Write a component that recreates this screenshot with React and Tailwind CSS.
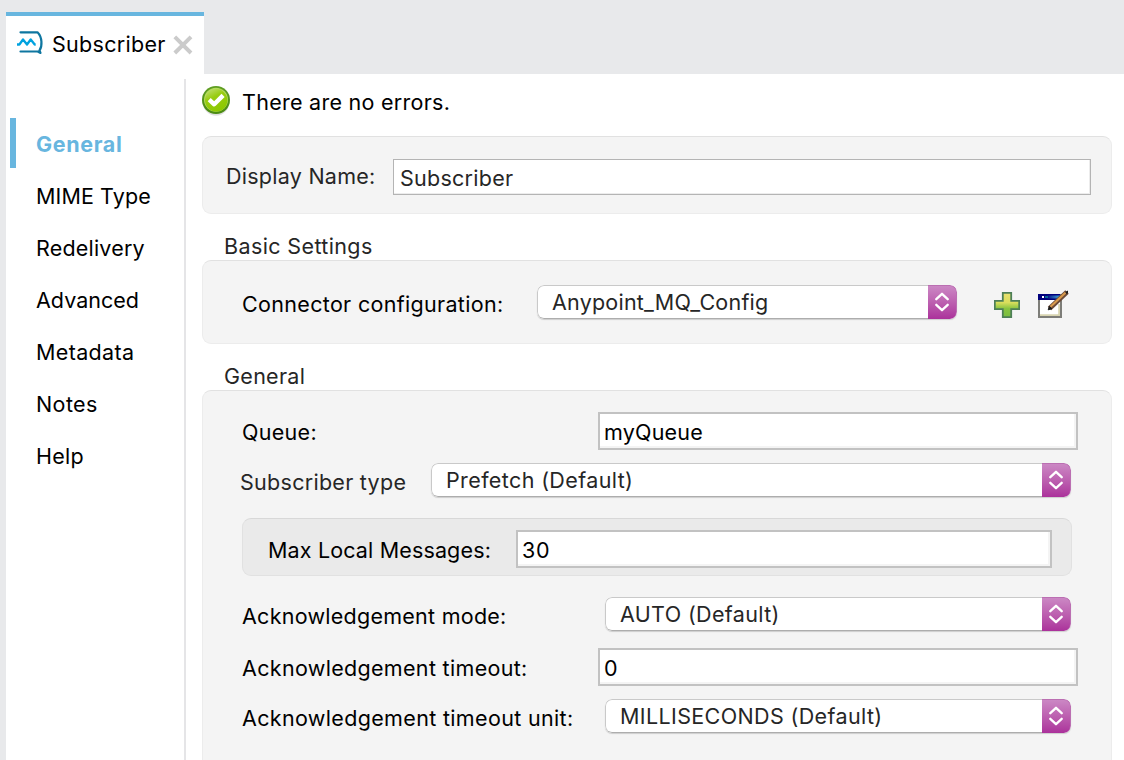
import React from "react";
import clsx from "clsx";

function SubscriberIcon() {
  return (
    <svg className="-ml-[1px] mb-[4px] h-[26px] w-[28px] shrink-0" viewBox="0 0 28 26" fill="none">
      <path d="M5.500 2.300h17c4.800 4.800 5 14 2 18.200l1 2.400-2.800-1.400H5.500" stroke="#0e76a0" strokeWidth="2.200" strokeLinecap="round" strokeLinejoin="round" />
      <path d="M2 14.500h2.400l3.600-5 4 5 3.700-5 4 5h1" stroke="#00a2df" strokeWidth="2.300" strokeLinejoin="round" />
    </svg>
  );
}

function CloseIcon() {
  return (
    <svg className="h-[20px] w-[20px] shrink-0" viewBox="0 0 20 20" fill="none">
      <path d="M1.8 1.8l16.2 16.2M18 1.8L1.8 18" stroke="#cbcbcb" strokeWidth="3.9" />
    </svg>
  );
}

function OkIcon() {
  return (
    <svg className="-ml-[1px] h-[32px] w-[30px] shrink-0" viewBox="0 0 30 32">
      <defs>
        <linearGradient id="okRing" x1="0" y1="0" x2="0" y2="1">
          <stop offset="0" stopColor="#5f9e22" />
          <stop offset="1" stopColor="#4a8a12" />
        </linearGradient>
        <linearGradient id="okFill" x1="0.1" y1="0" x2="0.6" y2="1">
          <stop offset="0" stopColor="#c0e070" />
          <stop offset="0.4" stopColor="#98cc10" />
          <stop offset="1" stopColor="#8cc800" />
        </linearGradient>
      </defs>
      <ellipse cx="15" cy="17.5" rx="13.2" ry="13.2" fill="#000" opacity="0.13" />
      <circle cx="15" cy="15" r="14" fill="url(#okRing)" />
      <circle cx="15" cy="14.8" r="12" fill="#b5da5c" />
      <circle cx="15.2" cy="15.3" r="11.2" fill="url(#okFill)" />
      <path d="M8.2 14.6l5 4.7 8.9-8.9" fill="none" stroke="#fff" strokeWidth="4.4" strokeLinejoin="round" />
    </svg>
  );
}

function PlusIcon() {
  return (
    <svg className="h-[28px] w-[26px] shrink-0" viewBox="0 0 26 28">
      <defs>
        <linearGradient id="plusFill" x1="0" y1="0" x2="0" y2="1">
          <stop offset="0" stopColor="#e9e170" />
          <stop offset="0.4" stopColor="#d9de5c" />
          <stop offset="0.65" stopColor="#86c440" />
          <stop offset="1" stopColor="#79bd3f" />
        </linearGradient>
      </defs>
      <path d="M8.8 1.8h8.4v8h8v8.4h-8v8H8.8v-8h-8V9.800h8z" fill="url(#plusFill)" stroke="#4d7f57" strokeWidth="1.800" />
    </svg>
  );
}

function EditIcon() {
  return (
    <svg className="h-[30px] w-[32px] shrink-0" viewBox="0 0 32 30">
      <defs>
        <linearGradient id="editBar" x1="0" y1="0" x2="1" y2="0">
          <stop offset="0.3" stopColor="#00007c" />
          <stop offset="1" stopColor="#3fa8d8" />
        </linearGradient>
      </defs>
      <rect x="0" y="4" width="24" height="24" fill="#7d7d78" />
      <rect x="2" y="10" width="20" height="16" fill="#fff" />
      <path d="M2 26V24.200H20.200V14H22V26Z" fill="#d8d4b0" />
      <rect x="0" y="4" width="22" height="6" fill="#00007c" />
      <rect x="2" y="5.500" width="20" height="3" fill="url(#editBar)" />
      <rect x="4" y="6" width="2" height="2" fill="#fff" />
      <rect x="7" y="6" width="3" height="2" fill="#0a6a9a" />
      <path d="M11.500 18.500L29 2" stroke="#6b4a38" strokeWidth="5" />
      <path d="M12.500 16.800L27.400 2.800" stroke="#d89a4c" strokeWidth="2.200" />
      <path d="M10.200 19.800l1.200-3.400 2.400 2.400z" fill="#1b1b1b" stroke="#1b1b1b" />
      <path d="M27.600 1.800L30 .4V3l-1.400 1.200z" fill="#1b1b1b" />
    </svg>
  );
}

function Select({ value, className, tracking }) {
  return (
    <div className={clsx("flex h-[34px] overflow-hidden rounded-[7px] bg-white shadow-[0_1px_1px_rgba(0,0,0,0.16)]", className)}>
      <div className="flex grow items-center rounded-l-[7px] border border-r-0 border-[#c9c9c9] border-b-[#adadad] pl-[14px]">
        <span className={clsx("whitespace-nowrap text-[#262626]", tracking)}>{value}</span>
      </div>
      <div className="flex w-[29px] justify-center rounded-r-[7px] border-t border-r border-[#bb6fb2] bg-linear-to-b from-[#cb87c4] to-[#ab319b] pt-[6px]">
        <svg className="h-[20px] w-[14px]" viewBox="0 0 14 20" fill="none">
          <path d="M1.300 7.200L7 1.800l5.700 5.400M1.300 12.800L7 18.200l5.700-5.400" stroke="#fff" strokeWidth="2.300" strokeLinecap="round" strokeLinejoin="round" />
        </svg>
      </div>
    </div>
  );
}

function TextField({ value, className, tracking }) {
  return (
    <div className={clsx("flex h-[38px] items-center border-2 border-[#c2c2c2] bg-white pt-[2px] pl-[4px] shadow-[inset_-2px_-2px_0_#f4f4f4]", className)}>
      <span className={clsx("text-black", tracking)}>{value}</span>
    </div>
  );
}

function Label({ children, className }) {
  return <span className={clsx("shrink-0 whitespace-nowrap", className)}>{children}</span>;
}

const panel = "border border-[#ececec] border-t-[#e1e1e1] bg-[#f4f4f4]";

const sections = [
  { label: "MIME Type", tracking: "tracking-[0.1px]" },
  { label: "Redelivery", tracking: "tracking-[0.2px]" },
  { label: "Advanced", tracking: "tracking-[0.02px]" },
  { label: "Metadata", tracking: "tracking-[0.35px]" },
  { label: "Notes", tracking: "tracking-[0.4px]" },
  { label: "Help", tracking: "tracking-[0.25px]" },
];

export default function App() {
  return (
    <div className="flex h-[760px] w-[1124px] flex-col overflow-hidden bg-[#e8e9eb] pl-[6px] font-['Inter','Liberation_Sans',sans-serif] text-[21.5px] leading-[30px] text-black">
      <header className="flex h-[74px] shrink-0 pt-[12px]">
        <div className="flex w-[198px] items-center border-t-4 border-[#68b6df] bg-white pl-[10px]">
          <SubscriberIcon />
          <span className="ml-[9px] w-[121px] pb-[2px] tracking-[0.3px]">Subscriber</span>
          <CloseIcon />
        </div>
      </header>

      <div className="flex min-h-0 grow bg-white">
        <nav className="mt-[5px] flex w-[180px] shrink-0 flex-col border-r-2 border-[#e5e5e7] pt-[39px]">
          <div className="mb-[1px] ml-[4px] flex h-[50px] items-center border-l-[6px] border-[#68b6df] pt-[2px] pl-[20px] font-bold tracking-[0.65px] text-[#68b6df]">
            General
          </div>
          {sections.map((s) => (
            <div key={s.label} className={clsx("flex h-[52px] items-center pt-[2px] pl-[30px]", s.tracking)}>
              {s.label}
            </div>
          ))}
        </nav>

        <main className="flex w-[926px] shrink-0 flex-col pl-[16px]">
          <div className="flex h-[62px] shrink-0 items-start pt-[11px]">
            <OkIcon />
            <Label className="ml-[11px] pt-[2px] tracking-[0.27px]">There are no errors.</Label>
          </div>

          <section className={clsx("flex h-[78px] shrink-0 items-center rounded-[9px] pl-[23px]", panel)}>
            <Label className="w-[167px] pt-[2px] tracking-[0.26px] text-[#262626]">Display Name:</Label>
            <div className="mt-[3px] flex h-[36px] w-[698px] items-center border border-[#b4b4b4] bg-white pt-[2px] pl-[6px] shadow-[inset_-1px_-1px_0_#ececec]">
              <span className="tracking-[0.26px] text-[#262626]">Subscriber</span>
            </div>
          </section>

          <h2 className="flex h-[46px] shrink-0 items-start pt-[17px] pl-[22px] tracking-[0.38px] text-[#262626]">Basic Settings</h2>
          <section className={clsx("flex h-[84px] shrink-0 items-start rounded-[9px] pt-[24px] pl-[39px]", panel)}>
            <Label className="w-[295px] pt-[4px] tracking-[0.32px]">Connector configuration:</Label>
            <Select className="w-[420px]" value="Anypoint_MQ_Config" tracking="tracking-[0.22px]" />
            <div className="ml-[37px] flex items-start gap-[18px]">
              <div className="pt-[6px]">
                <PlusIcon />
              </div>
              <div className="pt-[5px]">
                <EditIcon />
              </div>
            </div>
          </section>

          <h2 className="flex h-[46px] shrink-0 items-start pt-[17px] pl-[22px] tracking-[0.28px] text-[#262626]">General</h2>
          <section className={clsx("flex h-[400px] shrink-0 flex-col rounded-[9px] pt-[21px] pl-[39px]", panel)}>
            <div className="flex h-[38px] items-center">
              <Label className="w-[356px] pt-[2px] tracking-[0.29px]">Queue:</Label>
              <TextField className="w-[480px]" value="myQueue" tracking="tracking-[0.2px]" />
            </div>
            <div className="mt-[13px] -ml-[2px] flex h-[34px] items-center">
              <Label className="w-[191px] pt-[4px] tracking-[0.28px] text-[#262626]">Subscriber type</Label>
              <Select className="w-[640px]" value="Prefetch (Default)" tracking="tracking-[0.38px]" />
            </div>
            <div className="mt-[21px] flex h-[58px] w-[830px] items-center rounded-[9px] border border-[#e1e1e1] border-t-[#d8d8d8] bg-[#eaeaea] pl-[25px]">
              <Label className="w-[248px] pt-[6px] tracking-[0.15px]">Max Local Messages:</Label>
              <TextField className="mt-[4px] w-[536px] shadow-[inset_-2px_-2px_0_#ececec]" value="30" tracking="tracking-[0.6px]" />
            </div>
            <div className="mt-[21px] flex h-[34px] items-center">
              <Label className="w-[363px] pt-[4px] tracking-[0.26px]">Acknowledgement mode:</Label>
              <Select className="w-[466px]" value="AUTO (Default)" tracking="tracking-[0.35px]" />
            </div>
            <div className="mt-[17px] flex h-[38px] items-center">
              <Label className="w-[356px] pt-[2px] tracking-[0.32px]">Acknowledgement timeout:</Label>
              <TextField className="w-[480px]" value="0" />
            </div>
            <div className="mt-[13px] flex h-[34px] items-center">
              <Label className="w-[363px] pt-[4px] tracking-[0.34px]">Acknowledgement timeout unit:</Label>
              <Select className="w-[466px]" value="MILLISECONDS (Default)" tracking="tracking-[0.37px]" />
            </div>
          </section>
        </main>
      </div>
    </div>
  );
}
